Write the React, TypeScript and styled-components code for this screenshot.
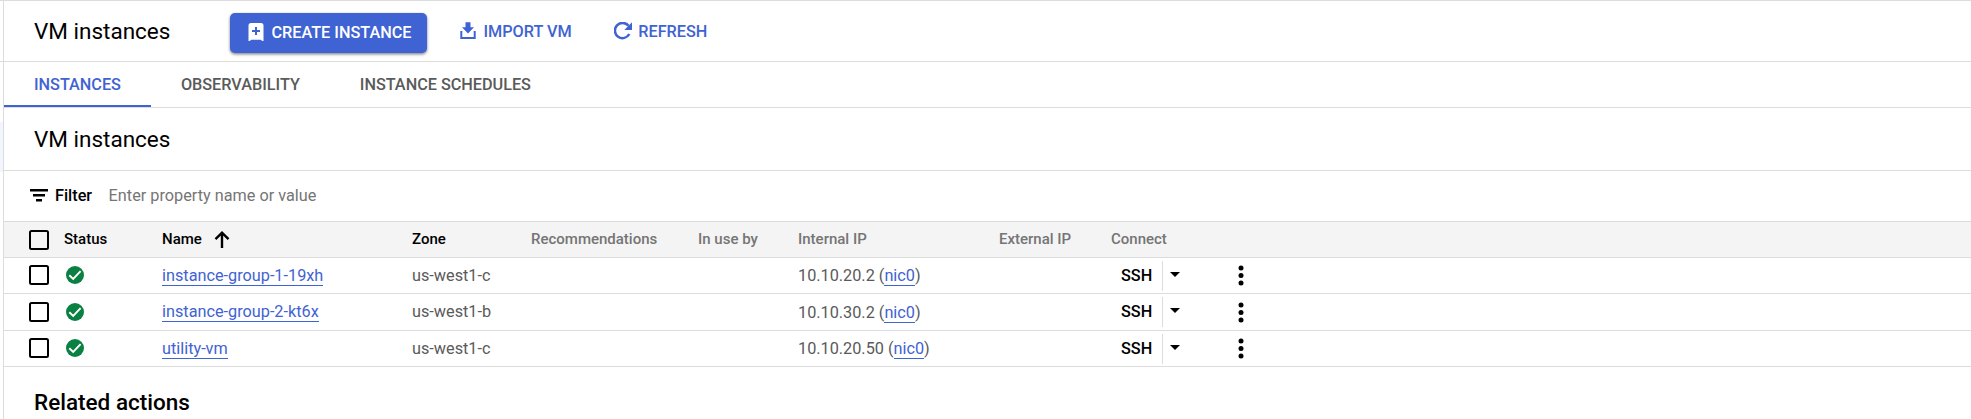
import React from "react";
import styled, { createGlobalStyle } from "styled-components";

const BLUE = "#3f63d2";
const LINE = "#dcdcdc";

const Global = createGlobalStyle`
  *, *::before, *::after { box-sizing: border-box; }
  html, body { margin: 0; background: #fff; }
  body { font-family: Roboto, "Liberation Sans", sans-serif; font-size: 16.25px; color: #000; overflow: hidden; }
  svg { display: block; flex: none; }
`;

const Shell = styled.div`
  display: flex;
  height: 419px;
  border-top: 1px solid ${LINE};
`;

const Rail = styled.div`
  width: 3px;
  flex: none;
  display: flex;
  flex-direction: column;
`;

const RailHeader = styled.div`
  height: 61px;
  border-bottom: 1px solid ${LINE};
`;

const RailActive = styled.div`
  margin-top: 60px;
  height: 50px;
  background: #f0f5fe;
`;

const Main = styled.main`
  flex: 1;
  min-width: 0;
  border-left: 1px solid ${LINE};
`;

const TopBar = styled.header`
  display: flex;
  align-items: center;
  height: 61px;
  padding-left: 30px;
  border-bottom: 1px solid ${LINE};
`;

const Title = styled.h1<{ $weight?: number }>`
  margin: 0;
  font-size: 22.5px;
  line-height: 30px;
  font-weight: ${(p) => p.$weight ?? 400};
`;

const Actions = styled.div`
  display: flex;
  align-items: center;
  margin-left: 60px;
  padding-top: 4px;
`;

const ActionButton = styled.button<{ $gap: number; $left: number }>`
  display: flex;
  align-items: center;
  gap: ${(p) => p.$gap}px;
  height: 40px;
  margin: 0 0 0 ${(p) => p.$left}px;
  padding: 0 0 3px;
  border: 0;
  background: transparent;
  color: ${BLUE};
  font: 500 16.25px/20px Roboto, sans-serif;
  white-space: nowrap;

  svg { margin-bottom: 1px; }
`;

const PrimaryButton = styled(ActionButton)`
  width: 197px;
  padding: 0 0 1px 18px;
  border-radius: 5px;
  background: ${BLUE};
  color: #fff;
  box-shadow: 0 1px 3px rgba(0, 0, 0, 0.4), 0 2px 3px rgba(0, 0, 0, 0.15);
`;

const Tabs = styled.nav`
  display: flex;
  height: 46px;
  border-bottom: 1px solid ${LINE};
`;

const Tab = styled.a<{ $active?: boolean }>`
  padding: 12px 30px 0;
  height: 45px;
  font-weight: 500;
  line-height: 22px;
  letter-spacing: -0.02px;
  color: ${(p) => (p.$active ? BLUE : "#5a5a5a")};
  border-bottom: 2px solid ${(p) => (p.$active ? BLUE : "transparent")};
`;

const Section = styled.section`
  display: flex;
  align-items: center;
  height: 63px;
  padding-left: 30px;
  border-bottom: 1px solid ${LINE};
`;

const FilterBar = styled.div`
  display: flex;
  align-items: center;
  height: 51px;
  padding: 0 0 1px 26px;
  line-height: 19px;
  border-bottom: 1px solid ${LINE};
`;

const FilterLabel = styled.span`
  margin-left: 7px;
  font-weight: 500;
`;

const Placeholder = styled.span`
  margin-left: 16.5px;
  color: #757575;
`;

const Row = styled.div<{ $height: number; $top: number }>`
  display: grid;
  grid-template-columns: 25px 35px 98px 250px 119px 167px 100px 201px 112px 127px 1fr;
  align-items: start;
  height: ${(p) => p.$height}px;
  padding-top: ${(p) => p.$top}px;
  border-bottom: 1px solid ${LINE};
  line-height: 21px;
  white-space: nowrap;
`;

const HeadRow = styled(Row)`
  background: #f4f4f4;
  font-size: 15px;
  font-weight: 500;
  line-height: 20px;
`;

const Cell = styled.div<{ $lift?: number }>`
  display: flex;
  align-items: flex-start;
  height: 20px;
  margin-top: ${(p) => -(p.$lift ?? 0)}px;
  color: #5a5a5a;
`;

const HeadCell = styled(Cell)<{ $strong?: boolean }>`
  color: ${(p) => (p.$strong ? "#000" : "#757575")};
`;

const StatusCell = styled(Cell)`
  padding: 1px 0 0 2px;
`;

const ConnectCell = styled(Cell)`
  padding-left: 10px;
`;

const Checkbox = styled.span`
  width: 20px;
  height: 20px;
  border: 2px solid #000;
  border-radius: 2.5px;
`;

const Link = styled.a`
  height: 21px;
  color: ${BLUE};
  border-bottom: 1px solid ${BLUE};
`;

const SshLabel = styled.span`
  width: 41px;
  font-weight: 500;
  color: #000;
`;

const SshMenu = styled.span`
  display: flex;
  height: 30px;
  margin-top: -4px;
  padding: 11px 0 0 7px;
  border-left: 1px solid ${LINE};
`;

const SortBox = styled.span`
  margin: 2px 0 0 12px;
`;

const Footer = styled.section`
  padding: 20px 0 0 30px;
`;

const CreateIcon = () => (
  <svg width="16" height="18" viewBox="0 0 16 18">
    <path fill="#fff" d="M3 0h10a2.500 2.500 0 0 1 2.500 2.500V18h-1L12.500 16.800h-9L1.500 18h-1V2.500A2.500 2.500 0 0 1 3 0z" />
    <path fill={BLUE} d="M7 4h2v3h3v2H9v3H7V9H4V7h3z" />
  </svg>
);

const ImportIcon = () => (
  <svg width="16" height="18" viewBox="0 0 16 18">
    <path fill={BLUE} d="M5.500 .3h5v5H14L8 11.500 2 5.300h3.500zM.3 9h2v6h11.400V9h2v8H.3z" />
  </svg>
);

const RefreshIcon = () => (
  <svg width="18" height="18" viewBox="0 0 18 18">
    <path d="M15.300 12A7.600 7.600 0 1 1 14.500 3.800" fill="none" stroke={BLUE} strokeWidth="2.500" />
    <path fill={BLUE} d="M18 .3v7.700h-7.700z" />
  </svg>
);

const FilterIcon = () => (
  <svg width="18" height="13" viewBox="0 0 18 13">
    <path fill="#000" d="M0 0h18v2.500H0zM3 5h12v2.500H3zM6 10h6v2.500H6z" />
  </svg>
);

const SortIcon = () => (
  <svg width="16" height="17" viewBox="0 0 16 17">
    <path d="M8 17V2M1.500 8.200L8 1.700l6.500 6.500" fill="none" stroke="#000" strokeWidth="2.400" />
  </svg>
);

const StatusIcon = () => (
  <svg width="18" height="18" viewBox="0 0 18 18">
    <circle cx="9" cy="9" r="9" fill="#0b8043" />
    <path d="M3.300 9.200l3.900 3.700 7.400-7.700" fill="none" stroke="#fff" strokeWidth="1.900" />
  </svg>
);

const CaretIcon = () => (
  <svg width="10" height="5" viewBox="0 0 10 5">
    <path d="M0 0h10L5 5z" fill="#000" />
  </svg>
);

const MoreIcon = () => (
  <svg width="6" height="21" viewBox="0 0 6 21">
    <circle cx="3" cy="3" r="2.500" />
    <circle cx="3" cy="10.500" r="2.500" />
    <circle cx="3" cy="18" r="2.500" />
  </svg>
);

const instances = [
  { name: "instance-group-1-19xh", zone: "us-west1-c", ip: "10.10.20.2", height: 36, top: 7, lift: 0 },
  { name: "instance-group-2-kt6x", zone: "us-west1-b", ip: "10.10.30.2", height: 37, top: 8, lift: 1 },
  { name: "utility-vm", zone: "us-west1-c", ip: "10.10.20.50", height: 36, top: 7, lift: 0 },
];

export default function App() {
  return (
    <>
      <Global />
      <Shell>
        <Rail>
          <RailHeader />
          <RailActive />
        </Rail>
        <Main>
          <TopBar>
            <Title>VM instances</Title>
            <Actions>
              <PrimaryButton $gap={7} $left={0}><CreateIcon />CREATE INSTANCE</PrimaryButton>
              <ActionButton $gap={7} $left={33}><ImportIcon />IMPORT VM</ActionButton>
              <ActionButton $gap={6} $left={42.5}><RefreshIcon />REFRESH</ActionButton>
            </Actions>
          </TopBar>
          <Tabs>
            <Tab $active>INSTANCES</Tab>
            <Tab>OBSERVABILITY</Tab>
            <Tab>INSTANCE SCHEDULES</Tab>
          </Tabs>
          <Section>
            <Title as="h2">VM instances</Title>
          </Section>
          <FilterBar>
            <FilterIcon />
            <FilterLabel>Filter</FilterLabel>
            <Placeholder>Enter property name or value</Placeholder>
          </FilterBar>
          <HeadRow $height={36} $top={8}>
            <i />
            <HeadCell><Checkbox /></HeadCell>
            <HeadCell $strong $lift={1}>Status</HeadCell>
            <HeadCell $strong $lift={1}>Name<SortBox><SortIcon /></SortBox></HeadCell>
            <HeadCell $strong $lift={1}>Zone</HeadCell>
            <HeadCell $lift={1}>Recommendations</HeadCell>
            <HeadCell $lift={1}>In use by</HeadCell>
            <HeadCell $lift={1}>Internal IP</HeadCell>
            <HeadCell $lift={1}>External IP</HeadCell>
            <HeadCell $lift={1}>Connect</HeadCell>
          </HeadRow>
          {instances.map((vm) => (
            <Row key={vm.name} $height={vm.height} $top={vm.top}>
              <i />
              <Cell><Checkbox /></Cell>
              <StatusCell><StatusIcon /></StatusCell>
              <Cell $lift={vm.lift}><Link>{vm.name}</Link></Cell>
              <Cell $lift={vm.lift}>{vm.zone}</Cell>
              <i />
              <i />
              <Cell>{vm.ip}&nbsp;(<Link>nic0</Link>)</Cell>
              <i />
              <ConnectCell $lift={vm.lift}>
                <SshLabel>SSH</SshLabel>
                <SshMenu><CaretIcon /></SshMenu>
              </ConnectCell>
              <Cell><MoreIcon /></Cell>
            </Row>
          ))}
          <Footer>
            <Title as="h2" $weight={500}>Related actions</Title>
          </Footer>
        </Main>
      </Shell>
    </>
  );
}
